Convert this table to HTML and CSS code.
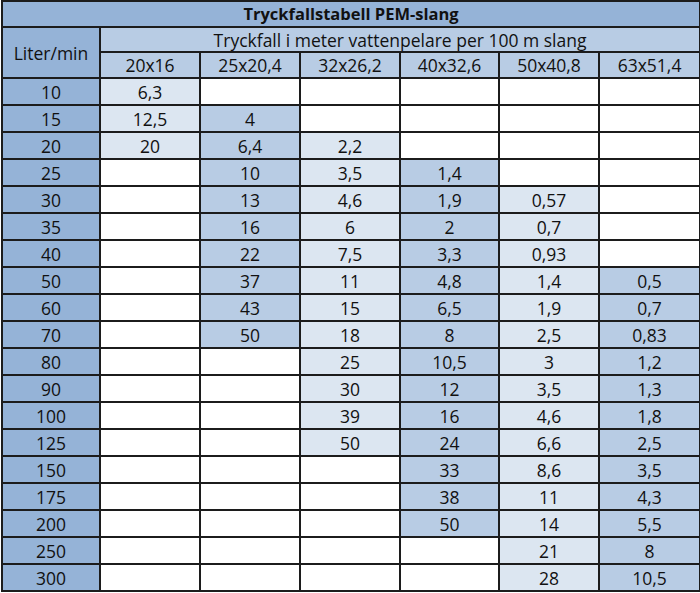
FILE: index.html
```html
<!DOCTYPE html>
<html lang="sv">
<head>
<meta charset="utf-8">
<title>Tryckfallstabell PEM-slang</title>
<link rel="stylesheet" href="styles.css">
</head>
<body>
<table class="tbl">
  <colgroup>
    <col class="c-first">
    <col class="c"><col class="c"><col class="c"><col class="c-narrow"><col class="c"><col class="c-last">
  </colgroup>
  <thead>
    <tr class="r-title"><th colspan="7" class="title">Tryckfallstabell PEM-slang</th></tr>
    <tr class="r-sub"><th rowspan="2" class="lbl">Liter/min</th><th colspan="6" class="sub">Tryckfall i meter vattenpelare per 100 m slang</th></tr>
    <tr class="r-head"><th class="sub">20x16</th><th class="sub">25x20,4</th><th class="sub">32x26,2</th><th class="sub">40x32,6</th><th class="sub">50x40,8</th><th class="sub">63x51,4</th></tr>
  </thead>
  <tbody>
    <tr><th class="lbl">10</th><td class="lt">6,3</td><td></td><td></td><td></td><td></td><td></td></tr>
    <tr><th class="lbl">15</th><td class="lt">12,5</td><td class="md">4</td><td></td><td></td><td></td><td></td></tr>
    <tr><th class="lbl">20</th><td class="lt">20</td><td class="md">6,4</td><td class="lt">2,2</td><td></td><td></td><td></td></tr>
    <tr><th class="lbl">25</th><td></td><td class="md">10</td><td class="lt">3,5</td><td class="md">1,4</td><td></td><td></td></tr>
    <tr><th class="lbl">30</th><td></td><td class="md">13</td><td class="lt">4,6</td><td class="md">1,9</td><td class="lt">0,57</td><td></td></tr>
    <tr><th class="lbl">35</th><td></td><td class="md">16</td><td class="lt">6</td><td class="md">2</td><td class="lt">0,7</td><td></td></tr>
    <tr><th class="lbl">40</th><td></td><td class="md">22</td><td class="lt">7,5</td><td class="md">3,3</td><td class="lt">0,93</td><td></td></tr>
    <tr><th class="lbl">50</th><td></td><td class="md">37</td><td class="lt">11</td><td class="md">4,8</td><td class="lt">1,4</td><td class="md">0,5</td></tr>
    <tr><th class="lbl">60</th><td></td><td class="md">43</td><td class="lt">15</td><td class="md">6,5</td><td class="lt">1,9</td><td class="md">0,7</td></tr>
    <tr><th class="lbl">70</th><td></td><td class="md">50</td><td class="lt">18</td><td class="md">8</td><td class="lt">2,5</td><td class="md">0,83</td></tr>
    <tr><th class="lbl">80</th><td></td><td></td><td class="lt">25</td><td class="md">10,5</td><td class="lt">3</td><td class="md">1,2</td></tr>
    <tr><th class="lbl">90</th><td></td><td></td><td class="lt">30</td><td class="md">12</td><td class="lt">3,5</td><td class="md">1,3</td></tr>
    <tr><th class="lbl">100</th><td></td><td></td><td class="lt">39</td><td class="md">16</td><td class="lt">4,6</td><td class="md">1,8</td></tr>
    <tr><th class="lbl">125</th><td></td><td></td><td class="lt">50</td><td class="md">24</td><td class="lt">6,6</td><td class="md">2,5</td></tr>
    <tr><th class="lbl">150</th><td></td><td></td><td></td><td class="md">33</td><td class="lt">8,6</td><td class="md">3,5</td></tr>
    <tr><th class="lbl">175</th><td></td><td></td><td></td><td class="md">38</td><td class="lt">11</td><td class="md">4,3</td></tr>
    <tr><th class="lbl">200</th><td></td><td></td><td></td><td class="md">50</td><td class="lt">14</td><td class="md">5,5</td></tr>
    <tr><th class="lbl">250</th><td></td><td></td><td></td><td></td><td class="lt">21</td><td class="md">8</td></tr>
    <tr><th class="lbl">300</th><td></td><td></td><td></td><td></td><td class="lt">28</td><td class="md">10,5</td></tr>
  </tbody>
</table>
</body>
</html>
```

FILE: styles.css
```css
html, body {
  margin: 0;
  padding: 0;
  background: #ffffff;
}

.tbl {
  border-collapse: collapse;
  table-layout: fixed;
  width: 698px;
  margin-left: 1px;
  font-family: "Open Sans", "Noto Sans", sans-serif;
  font-size: 17.5px;
  color: #111111;
  border: 2px solid #1c1c1c;
}

.c-first { width: 98px; }
.c { width: 100px; }
.c-narrow { width: 99px; }
.c-last { width: 101px; }

.tbl th,
.tbl td {
  border: 2px solid #1c1c1c;
  padding: 0;
  text-align: center;
  vertical-align: middle;
  font-weight: normal;
  line-height: 20px;
  background: #ffffff;
}

.r-title { height: 26px; }
.r-sub { height: 25px; }
.r-head { height: 26px; }
.tbl tbody tr { height: 27px; }

.tbl .title {
  background: #95b3d7;
  font-weight: bold;
  font-size: 16.5px;
}

.tbl .lbl {
  background: #95b3d7;
}

.tbl .sub {
  background: #b8cce4;
}

.tbl .r-sub .sub {
  border-bottom-width: 1px;
}

.tbl .md {
  background: #b8cce4;
}

.tbl .lt {
  background: #dce6f1;
}
```
